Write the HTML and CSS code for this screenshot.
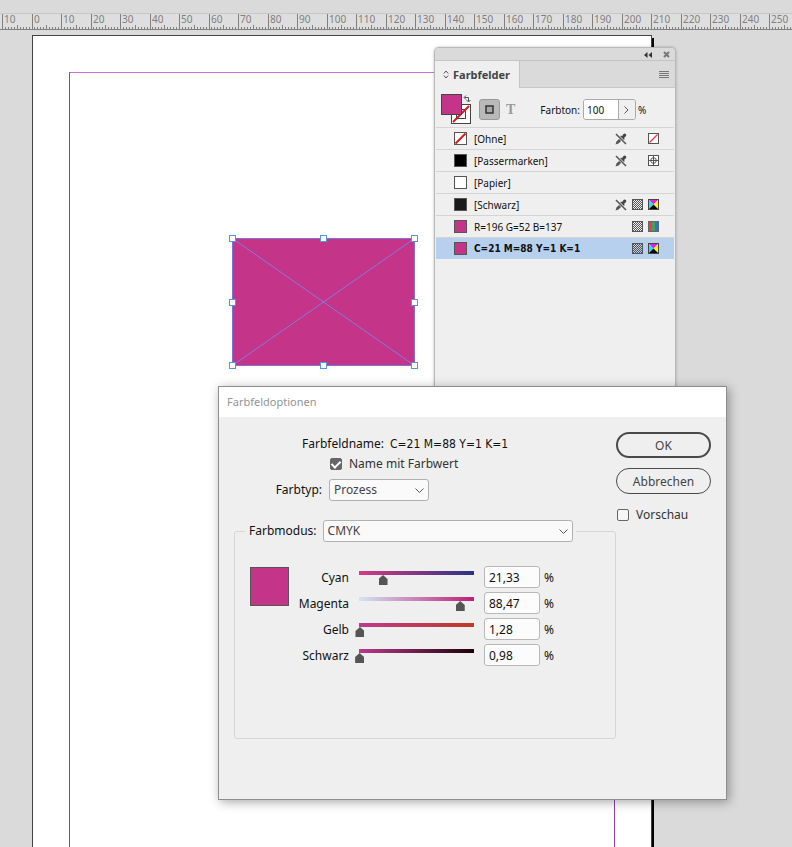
FILE: index.html
```html
<!DOCTYPE html>
<html lang="de">
<head>
<meta charset="utf-8">
<title>Farbfeldoptionen</title>
<link rel="stylesheet" href="styles.css">
</head>
<body>
<svg class="defs" aria-hidden="true">
  <defs>
    <pattern id="checks" width="2" height="2" patternUnits="userSpaceOnUse">
      <path d="M0 0h1v1H0zM1 1h1v1H1z" fill="#555"/>
    </pattern>
    <symbol id="i-locked" viewBox="0 0 12 12">
      <path d="M.5 11.500l1-3 4-4 2 2-4 4z" fill="#555"/>
      <path d="M5 3.500l1-1 1 .8L8.500 1q1.200-1 2.300 0t0 2.300L9 5l.8 1-1 1z" fill="#444"/>
      <path d="M1 1l10 10" stroke="#efefef" stroke-width="2.500"/>
      <path d="M1 1l10 10" stroke="#555" stroke-width="1.500"/>
    </symbol>
    <symbol id="i-none" viewBox="0 0 11 11">
      <rect x=".5" y=".5" width="10" height="10" fill="#fff" stroke="#555"/>
      <path d="M1.500 9.500l8-8" stroke="#e83a3a" stroke-width="1.200"/>
    </symbol>
    <symbol id="i-register" viewBox="0 0 11 11">
      <rect x=".5" y=".5" width="10" height="10" fill="#fff" stroke="#555"/>
      <circle cx="5.500" cy="5.500" r="2.800" fill="none" stroke="#555"/>
      <path d="M5.500 1v9M1 5.500h9" stroke="#555"/>
    </symbol>
    <symbol id="i-process" viewBox="0 0 11 11">
      <rect x="1" y="1" width="9" height="9" fill="url(#checks)"/>
      <rect x=".5" y=".5" width="10" height="10" fill="none" stroke="#555"/>
    </symbol>
    <symbol id="i-cmyk" viewBox="0 0 11 11">
      <path d="M1 1h9L5.500 5.500z" fill="#f01be0"/>
      <path d="M1 1v9l4.500-4.500z" fill="#1ce3f2"/>
      <path d="M10 1v9L5.500 5.500z" fill="#fff21a"/>
      <path d="M1 10h9L5.500 5.500z" fill="#000"/>
      <rect x=".5" y=".5" width="10" height="10" fill="none" stroke="#444"/>
    </symbol>
    <symbol id="i-rgb" viewBox="0 0 11 11">
      <path d="M1 1h3v9H1z" fill="#e2443c"/>
      <path d="M4 1h3v9H4z" fill="#3fa164"/>
      <path d="M7 1h3v9H7z" fill="#2277d8"/>
      <rect x=".5" y=".5" width="10" height="10" fill="none" stroke="#666"/>
    </symbol>
  </defs>
</svg>

<header class="topbar"></header>
<svg class="ruler" id="ruler" role="img" aria-label="Lineal"></svg>

<main class="workspace">
  <div class="page"><div class="margins"></div></div>

  <svg class="frame" viewBox="0 0 190 135" role="img" aria-label="Rechteckrahmen">
    <rect x="4.500" y="4.500" width="182" height="127" fill="#c43489" stroke="#7f6fd6"/>
    <path d="M4.500 4.500l182 127M186.500 4.500l-182 127" stroke="#8878dd" fill="none"/>
    <g fill="#fff" stroke="#5596dc">
      <rect x="1.500" y="1.500" width="6" height="6"/><rect x="92.500" y="1.500" width="6" height="6"/><rect x="183.500" y="1.500" width="6" height="6"/>
      <rect x="1.500" y="65.500" width="6" height="6"/><rect x="183.500" y="65.500" width="6" height="6"/>
      <rect x="1.500" y="128.500" width="6" height="6"/><rect x="92.500" y="128.500" width="6" height="6"/><rect x="183.500" y="128.500" width="6" height="6"/>
    </g>
  </svg>

  <section class="panel" aria-label="Farbfelder">
    <div class="panel-top">
      <button class="bare" aria-label="Minimieren"><svg width="8" height="6" viewBox="0 0 8 6"><path d="M3.500 0v6L0 3zM8 0v6L4.500 3z" fill="#333"/></svg></button>
      <button class="bare" aria-label="Schließen"><svg width="7" height="7" viewBox="0 0 7 7"><path d="M1 1l5 5M6 1L1 6" stroke="#777" stroke-width="2"/></svg></button>
    </div>
    <div class="tabs">
      <button class="tab"><svg width="6" height="9" viewBox="0 0 6 9"><path d="M.8 3.500L3 1l2.200 2.500M.8 5.500L3 8l2.200-2.500" fill="none" stroke="#555"/></svg>Farbfelder</button>
      <button class="bare" aria-label="Menü"><svg width="10" height="8" viewBox="0 0 10 8"><path d="M0 .5h10M0 2.500h10M0 4.500h10M0 6.500h10" stroke="#777"/></svg></button>
    </div>
    <div class="tools">
      <svg width="31" height="31" viewBox="0 0 31 31" role="img" aria-label="Fläche und Kontur">
        <rect x="10.500" y="10.500" width="19" height="19" fill="#fff" stroke="#444"/>
        <rect x="15.500" y="15.500" width="9" height="9" fill="none" stroke="#444"/>
        <path d="M12 28L28 12" stroke="#d81818" stroke-width="2"/>
        <rect x=".5" y=".5" width="20" height="20" fill="#c43489" stroke="#444"/>
        <path d="M25 1.500l-2 2 2 2M23.500 3.500h4v4M25.500 6l2 2 2-2" fill="none" stroke="#555"/>
      </svg>
      <button class="target" aria-label="Formatierung wirkt sich auf Container aus"><svg width="9" height="9" viewBox="0 0 9 9"><rect x="1" y="1" width="7" height="7" fill="#a8a8a8" stroke="#333" stroke-width="1.500"/></svg></button>
      <button class="bare text-target">T</button>
      <label class="tint" for="tint">Farbton:</label>
      <div class="stepper">
        <input id="tint" value="100">
        <button aria-label="Farbton wählen"><svg width="5" height="8" viewBox="0 0 5 8"><path d="M.5.5L4 4 .5 7.500" fill="none" stroke="#555"/></svg></button>
      </div>
      <span>%</span>
    </div>
    <ul class="swatches">
      <li><svg class="chip" viewBox="0 0 13 13"><rect x=".5" y=".5" width="12" height="12" fill="#fff" stroke="#555"/><path d="M1.500 11.500l10-10" stroke="#d81818" stroke-width="2"/></svg><span>[Ohne]</span>
        <svg class="lock"><use href="#i-locked"/></svg><svg class="mode"><use href="#i-none"/></svg></li>
      <li><i class="chip black"></i><span>[Passermarken]</span>
        <svg class="lock"><use href="#i-locked"/></svg><svg class="mode"><use href="#i-register"/></svg></li>
      <li><i class="chip white"></i><span>[Papier]</span></li>
      <li><i class="chip rich"></i><span>[Schwarz]</span>
        <svg class="lock"><use href="#i-locked"/></svg><svg class="type"><use href="#i-process"/></svg><svg class="mode"><use href="#i-cmyk"/></svg></li>
      <li><i class="chip pink"></i><span>R=196 G=52 B=137</span>
        <svg class="type"><use href="#i-process"/></svg><svg class="mode"><use href="#i-rgb"/></svg></li>
      <li class="selected"><i class="chip pink"></i><span>C=21 M=88 Y=1 K=1</span>
        <svg class="type"><use href="#i-process"/></svg><svg class="mode"><use href="#i-cmyk"/></svg></li>
    </ul>
  </section>

  <section class="dialog" role="dialog" aria-labelledby="dialog-title">
    <h1 id="dialog-title">Farbfeldoptionen</h1>
    <form class="dialog-body">
      <div class="options">
        <div class="name-row"><span>Farbfeldname:</span><output>C=21 M=88 Y=1 K=1</output></div>
        <div class="check-row"><label class="check"><input type="checkbox" checked>Name mit Farbwert</label></div>
        <div class="type-row"><label for="type">Farbtyp:</label><select id="type"><option>Prozess</option><option>Volltonfarbe</option></select></div>
        <fieldset>
          <legend><label for="cmode">Farbmodus:</label><select id="cmode"><option>CMYK</option><option>RGB</option><option>Lab</option></select></legend>
          <div class="mixer">
            <div class="preview"></div>
            <div class="channels">
              <label for="c">Cyan</label><input class="cyan" type="range" step="any" value="21.33" aria-label="Cyan"><input id="c" value="21,33"><span>%</span>
              <label for="m">Magenta</label><input class="magenta" type="range" step="any" value="88.47" aria-label="Magenta"><input id="m" value="88,47"><span>%</span>
              <label for="y">Gelb</label><input class="yellow" type="range" step="any" value="1.28" aria-label="Gelb"><input id="y" value="1,28"><span>%</span>
              <label for="k">Schwarz</label><input class="key" type="range" step="any" value="0.98" aria-label="Schwarz"><input id="k" value="0,98"><span>%</span>
            </div>
          </div>
        </fieldset>
      </div>
      <div class="actions">
        <button type="button" class="primary">OK</button>
        <button type="button">Abbrechen</button>
        <label class="check"><input type="checkbox">Vorschau</label>
      </div>
    </form>
  </section>
</main>
<script src="ruler.js"></script>
</body>
</html>
```
FILE: styles.css
```css
* { box-sizing: border-box; }

body {
  margin: 0;
  height: 100vh;
  display: flex;
  flex-direction: column;
  overflow: hidden;
  background: #dadada;
  color: #111;
  font: 12px/18px "Noto Sans", sans-serif;
}

button, input, select { font: inherit; color: inherit; margin: 0; }
svg { display: block; }
.defs { position: absolute; width: 0; height: 0; }

.bare { display: flex; padding: 0; border: 0; background: none; }

.topbar { height: 13px; flex: none; }

/* Ruler */
.ruler {
  flex: none;
  width: 100%;
  height: 17px;
  border-top: 1px solid #c8c8c8;
  border-bottom: 1px solid #808080;
  background: #dedede;
  font-size: 10px;
  fill: #808080;
}

/* Canvas */
.workspace { position: relative; flex: 1; min-height: 0; padding: 5px 0 0 32px; display: flex; }

.page {
  width: 620px;
  border: 1px solid #444;
  border-bottom: 0;
  background: #fff;
  box-shadow: 2px 3px 0 #000;
  padding: 36px 36px 0;
  display: flex;
}

.margins {
  flex: 1;
  border: 1px solid #8743b5;
  border-top-color: #cf6bd6;
  border-bottom: 0;
}

.frame { position: absolute; left: 228px; top: 204px; width: 190px; height: 135px; }

/* Swatches panel */
.panel {
  position: absolute;
  left: 434px;
  top: 17px;
  width: 242px;
  height: 400px;
  border: 1px solid #b8b8b8;
  border-radius: 5px 5px 0 0;
  background: #efefef;
  box-shadow: 0 0 3px rgba(0, 0, 0, .25);
  font-size: 10px;
}

.panel-top {
  display: flex;
  justify-content: flex-end;
  align-items: center;
  gap: 11px;
  height: 13px;
  padding: 1px 5px 0 0;
  border-bottom: 1px solid #c4c4c4;
  border-radius: 4px 4px 0 0;
  background: #dadada;
}

.tabs {
  display: flex;
  justify-content: space-between;
  align-items: center;
  height: 27px;
  padding-right: 6px;
  background: linear-gradient(#c8c8c8, #c8c8c8) bottom / 100% 1px no-repeat #dadada;
}

.tab {
  display: flex;
  align-items: center;
  gap: 4px;
  height: 27px;
  padding: 0 9px 0 8px;
  border: 0;
  border-right: 1px solid #c4c4c4;
  background: #efefef;
  color: #444;
  font-size: 11px;
  font-weight: 700;
}

.tools { display: flex; align-items: center; height: 39px; padding: 4px 6px 0; }

.target {
  display: grid;
  place-items: center;
  width: 21px;
  height: 21px;
  margin-left: 7px;
  padding: 0;
  border: 1px solid #999;
  border-radius: 3px;
  background: #b9b9b9;
}

.text-target { margin-left: 6px; color: #999; font: 700 14px/20px "Liberation Serif", serif; }
.tint { margin-left: 25px; }

.stepper {
  display: flex;
  width: 53px;
  height: 21px;
  margin: 0 2px 0 3px;
  border: 1px solid #aaa;
  border-radius: 3px;
  overflow: hidden;
}

.stepper input { width: 34px; padding: 0 3px; border: 0; background: #fff; }

.stepper button {
  flex: 1;
  display: grid;
  place-items: center;
  padding: 0;
  border: 0;
  border-left: 1px solid #aaa;
  background: #efefef;
}

.swatches { margin: 0 1px; padding: 0; list-style: none; }

.swatches li {
  display: grid;
  grid-template-columns: 13px 1fr 12px 12px 12px;
  grid-template-rows: 21px;
  column-gap: 4px;
  align-items: center;
  height: 22px;
  padding: 0 15px 0 18px;
  border-top: 1px solid #d4d4d4;
}

.swatches li > * { grid-row: 1; }
.swatches span { grid-column: 2; padding-left: 3px; }
.swatches .selected { background: #b7d0ee; font-family: "DejaVu Sans Condensed", "DejaVu Sans", sans-serif; font-weight: 700; }

.chip { width: 13px; height: 13px; border: 1px solid #555; }
svg.chip { border: 0; }
.black { background: #000; }
.white { background: #fff; }
.rich { background: #1a1a1a; }
.pink { background: #c43489; }

.lock { grid-column: 3; width: 12px; height: 12px; }
.type { grid-column: 4; width: 11px; height: 11px; }
.mode { grid-column: 5; width: 11px; height: 11px; }
.mode, .type { margin-left: 1px; }

/* Swatch options dialog */
.dialog {
  position: absolute;
  left: 218px;
  top: 356px;
  width: 509px;
  border: 1px solid #8e8e8e;
  background: #efefef;
  box-shadow: 2px 2px 10px rgba(0, 0, 0, .35);
}

.dialog h1 {
  margin: 0;
  padding: 0 8px;
  background: #fff;
  color: #949494;
  font-size: 11px;
  font-weight: 400;
  line-height: 30px;
}

.dialog-body { display: flex; padding: 15px 15px 60px; }
.options { flex: 1; }

.name-row { display: flex; gap: 6px; padding: 1px 0 0 68px; line-height: 22px; }
.name-row output { font-family: "DejaVu Sans Condensed", "DejaVu Sans", sans-serif; }
.check-row { padding-left: 96px; }
.type-row { display: grid; grid-template-columns: 88px 100px; column-gap: 7px; margin: 6px 0 19px; align-items: center; }
.type-row label { text-align: right; }

.check { display: flex; align-items: center; gap: 7px; color: #333; }

.check input {
  appearance: none;
  width: 12px;
  height: 12px;
  border: 1px solid #666;
  border-radius: 2px;
  background: #f6f6f6;
  display: grid;
  place-items: center;
}

.check input:checked { background: #666; }

.check input:checked::after {
  content: "";
  width: 4px;
  height: 7px;
  margin-top: -2px;
  border: solid #fff;
  border-width: 0 2px 2px 0;
  transform: rotate(45deg);
}

select {
  appearance: none;
  height: 22px;
  padding: 0 4px;
  border: 1px solid #b0b0b0;
  border-radius: 3px;
  color: #444;
  background: #fafafa url("data:image/svg+xml,%3Csvg xmlns='http://www.w3.org/2000/svg' width='9' height='5'%3E%3Cpath d='M.5.5l4 4 4-4' fill='none' stroke='%23555'/%3E%3C/svg%3E") right 4px center no-repeat;
}

fieldset {
  margin: 0;
  min-width: 0;
  min-height: 219px;
  padding: 24px 0 0 15px;
  border: 1px solid #d6d6d6;
  border-radius: 3px;
}

legend { display: flex; align-items: center; gap: 6px; margin-left: -5px; padding: 0 3px 0 4px; }
legend select { width: 250px; }

.mixer { display: flex; align-items: flex-start; }
.preview { width: 39px; height: 39px; margin-top: 1px; border: 1px solid #555; background: #c43489; }

.channels {
  display: grid;
  grid-template-columns: 60px 135px 56px auto;
  row-gap: 4px;
  align-items: center;
}

.channels label { padding-top: 1px; text-align: right; }
.channels span { padding: 1px 0 0 4px; }

.channels input:not([type="range"]) {
  width: 56px;
  height: 22px;
  padding: 0 4px;
  border: 1px solid #b8b8b8;
  border-radius: 3px;
  background: #fcfcfc;
}

.channels input[type="range"] {
  appearance: none;
  width: 124px;
  height: 16px;
  margin-left: 5px;
  background: linear-gradient(to right, var(--from), var(--to)) 5px 2px / 115px 4px no-repeat;
}

.channels input[type="range"]::-webkit-slider-runnable-track { height: 16px; }

.channels input[type="range"]::-webkit-slider-thumb {
  appearance: none;
  width: 9px;
  height: 10px;
  margin-top: 6px;
  background: #555;
  clip-path: polygon(50% 0, 100% 40%, 100% 100%, 0 100%, 0 40%);
}

.channels .cyan { --from: #d63a85; --to: #2b3384; }
.channels .magenta { --from: #d3e5f3; --to: #bd1d75; }
.channels .yellow { --from: #bd3a8b; --to: #bf3a26; }
.channels .key { --from: #bd3a8b; --to: #1c0008; }

.actions { width: 95px; display: flex; flex-direction: column; gap: 10px; }

.actions button {
  height: 26px;
  padding: 2px 0 0;
  border: 1px solid #4a4a4a;
  border-radius: 13px;
  background: none;
  color: #444;
}

.actions .primary { border-width: 2px; }
.actions .check { margin: 2px 0 0 1px; }
```
FILE: ruler.js
```js
const ruler = document.getElementById("ruler");
const origin = 32;
const pixelsPerMm = 2.95;
let path = "";
let labels = "";
for (let mm = -10; mm < 260; mm++) {
  const x = Math.floor(origin + mm * pixelsPerMm);
  const height = mm % 10 === 0 ? 15 : mm % 5 === 0 ? 4 : 2;
  path += `M${x + 0.5} 15v-${height}`;
  if (mm % 10 === 0) labels += `<text x="${x + 2}" y="9">${Math.abs(mm)}</text>`;
}
ruler.innerHTML = `<path d="${path}" stroke="#808080"/>${labels}`;
```
